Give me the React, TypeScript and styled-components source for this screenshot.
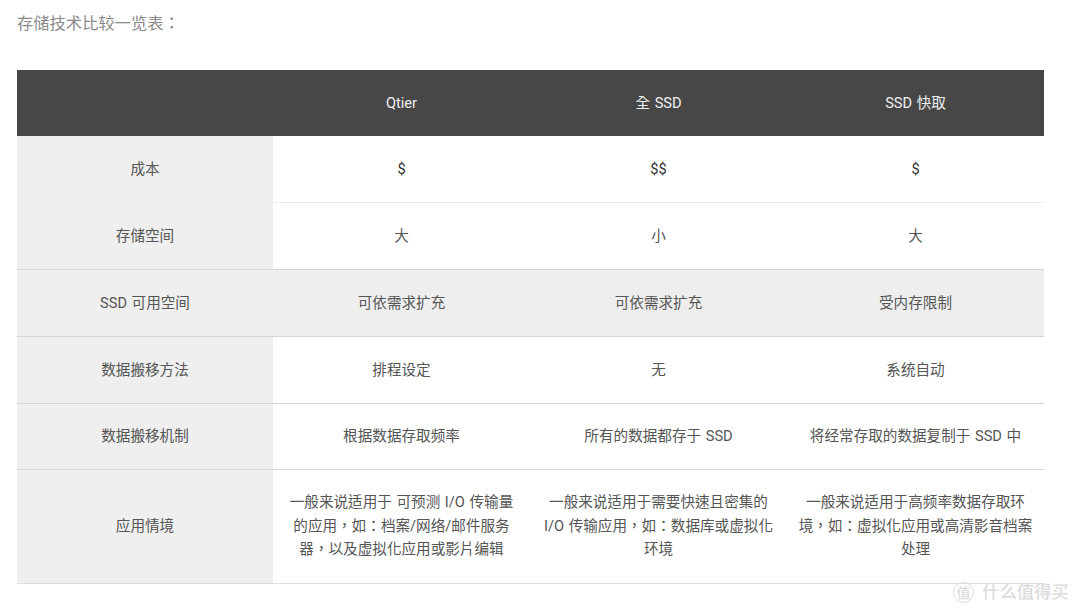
import React from "react";
import styled, { createGlobalStyle } from "styled-components";

const GlobalStyle = createGlobalStyle`
  html, body {
    margin: 0;
    padding: 0;
    background: #fff;
  }
  body {
    font-family: Roboto, "Noto Sans CJK TC", sans-serif;
  }
`;

const Page = styled.div`
  position: relative;
  width: 1080px;
  height: 614px;
  padding: 12px 36px 0 17px;
  box-sizing: border-box;
  overflow: hidden;
`;

const Title = styled.p`
  margin: 0 0 35px;
  height: 23px;
  font-size: 16.3px;
  line-height: 23px;
  color: #8a8a8a;
`;

const Table = styled.table`
  width: 1027px;
  border-collapse: separate;
  border-spacing: 0;
  table-layout: fixed;
  font-size: 14.6px;
  line-height: 23.5px;
  word-spacing: 1px;
  color: #555;
`;

const HeadRow = styled.tr`
  height: 66px;
  background: #474747;
  color: #f0f0f0;
`;

const HeadCell = styled.th<{ $w: number }>`
  width: ${({ $w }) => $w}px;
  padding: 1px 0 0;
  box-sizing: border-box;
  font-weight: 400;
  text-align: center;
`;

const Row = styled.tr<{ $h: number; $shade?: boolean }>`
  height: ${({ $h }) => $h}px;
  background: ${({ $shade }) => ($shade ? "#eeeeee" : "#ffffff")};
`;

const LabelCell = styled.td<{ $line: string; $top: number }>`
  padding: ${({ $top }) => $top}px 0 0;
  text-align: center;
  background: #efefef;
  border-bottom: 1px solid ${({ $line }) => $line};
`;

const Cell = styled.td<{ $dark?: boolean; $line: string; $top: number }>`
  padding: ${({ $top }) => $top}px 11px 0;
  text-align: center;
  color: ${({ $dark }) => ($dark ? "#333" : "inherit")};
  border-bottom: 1px solid ${({ $line }) => $line};
`;

const Watermark = styled.div`
  position: absolute;
  left: 953px;
  top: 581px;
  display: flex;
  align-items: center;
  gap: 8px;
  color: #dcdcdc;
  font-size: 17.4px;
  line-height: 23px;
  font-weight: 500;
`;

const Badge = styled.span`
  width: 19px;
  height: 19px;
  display: flex;
  align-items: center;
  justify-content: center;
  border: 1.5px solid #dcdcdc;
  border-radius: 50%;
  font-size: 14px;
  line-height: 1;
`;

const rows = [
  { h: 67, top: 2, line: "#ececec", label: "成本", cells: ["$", "$$", "$"], dark: true },
  { h: 67, top: 2, line: "#d6d6d6", label: "存储空间", cells: ["大", "小", "大"] },
  { h: 67, top: 2, line: "#d6d6d6", label: "SSD 可用空间", cells: ["可依需求扩充", "可依需求扩充", "受内存限制"], shade: true },
  { h: 67, top: 2, line: "#d6d6d6", label: "数据搬移方法", cells: ["排程设定", "无", "系统自动"] },
  { h: 66, top: 0, line: "#d6d6d6", label: "数据搬移机制", cells: ["根据数据存取频率", "所有的数据都存于 SSD", "将经常存取的数据复制于 SSD 中"] },
  {
    h: 114,
    top: 0,
    line: "#dddddd",
    label: "应用情境",
    cells: [
      "一般来说适用于 可预测 I/O 传输量的应用，如：档案/网络/邮件服务器，以及虚拟化应用或影片编辑",
      "一般来说适用于需要快速且密集的 I/O 传输应用，如：数据库或虚拟化环境",
      "一般来说适用于高频率数据存取环境，如：虚拟化应用或高清影音档案处理",
    ],
  },
];

export default function App() {
  return (
    <Page>
      <GlobalStyle />
      <Title>存储技术比较一览表：</Title>
      <Table>
        <thead>
          <HeadRow>
            <HeadCell $w={256} />
            <HeadCell $w={257}>Qtier</HeadCell>
            <HeadCell $w={257}>全 SSD</HeadCell>
            <HeadCell $w={257}>SSD 快取</HeadCell>
          </HeadRow>
        </thead>
        <tbody>
          {rows.map((r) => (
            <Row key={r.label} $h={r.h} $shade={r.shade}>
              <LabelCell $line={r.line} $top={r.top}>
                {r.label}
              </LabelCell>
              {r.cells.map((c, i) => (
                <Cell key={i} $dark={r.dark} $line={r.line} $top={r.top}>
                  {c}
                </Cell>
              ))}
            </Row>
          ))}
        </tbody>
      </Table>
      <Watermark>
        <Badge>值</Badge>
        什么值得买
      </Watermark>
    </Page>
  );
}
